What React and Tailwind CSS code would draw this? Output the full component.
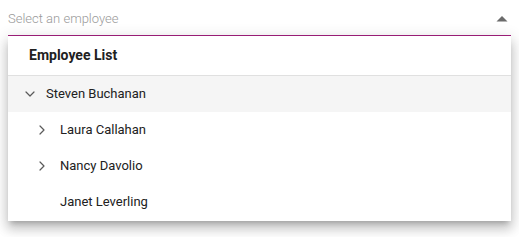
import { ChevronDown, ChevronRight } from 'lucide-react';

const rows = [
  { name: 'Steven Buchanan', level: 0, icon: 'down', active: true },
  { name: 'Laura Callahan', level: 1, icon: 'right' },
  { name: 'Nancy Davolio', level: 1, icon: 'right' },
  { name: 'Janet Leverling', level: 1, icon: null },
];

export default function App() {
  return (
    <div className="w-[519px] h-[237px] bg-white px-2 font-['Roboto',sans-serif]">
      {/* Input */}
      <div className="h-[36px] flex items-center justify-between border-b border-[#a3207d] pt-[2px]">
        <span className="text-[13px] text-[#9a9a9a] font-light">Select an employee</span>
        <svg width="14" height="12" viewBox="0 0 14 12" className="mr-[2px] mt-[1px]">
          <path d="M1.5 8.5L7 3l5.5 5.5z" fill="#6b6b6b" />
        </svg>
      </div>

      {/* Popup */}
      <div className="bg-white shadow-[0_5px_5px_-3px_rgba(0,0,0,0.2),0_8px_10px_1px_rgba(0,0,0,0.14),0_3px_14px_2px_rgba(0,0,0,0.12)]">
        <div className="h-[40px] flex items-center pl-[21px] border-b border-[#e0e0e0]">
          <span className="text-[14px] font-bold text-[#212121]">Employee List</span>
        </div>
        <div className="pb-[1px]">
          {rows.map((r) => (
            <div
              key={r.name}
              className={
                'h-[36px] flex items-center text-[13px] text-[#212121] ' +
                (r.active ? 'bg-[#f5f5f5]' : 'bg-white')
              }
            >
              <div className={'flex ' + (r.level === 0 ? 'w-[38px] pl-[14px]' : 'w-[52px] pl-[26px]')}>
                {r.icon === 'down' && <ChevronDown size={16} strokeWidth={1.8} color="#5a5a5a" />}
                {r.icon === 'right' && <ChevronRight size={16} strokeWidth={1.8} color="#5a5a5a" />}
              </div>
              <span>{r.name}</span>
            </div>
          ))}
        </div>
      </div>
    </div>
  );
}
